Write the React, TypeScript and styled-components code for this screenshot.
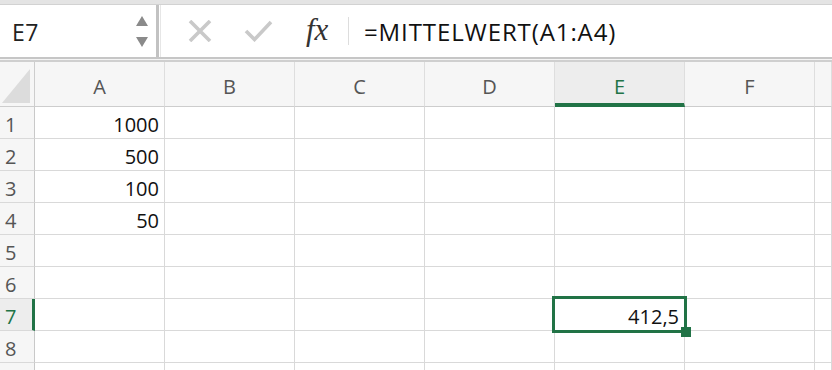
import React from "react";
import styled, { createGlobalStyle } from "styled-components";

const GREEN = "#217346";
const GRID = "#d9d9d9";
const UI_FONT = `"Open Sans", "Liberation Sans", sans-serif`;

const Global = createGlobalStyle`
  html, body { margin: 0; padding: 0; background: #ffffff; }
  body { width: 832px; height: 370px; overflow: hidden; font-family: ${UI_FONT}; }
  * { box-sizing: border-box; }
`;

const Page = styled.div`
  width: 832px;
  height: 370px;
  overflow: hidden;
  display: flex;
  flex-direction: column;
`;

const TopStrip = styled.div`
  height: 5px;
  flex: none;
  background: #e4e4e4;
  border-bottom: 1px solid #d2d2d2;
`;

const FormulaBar = styled.div`
  height: 52px;
  flex: none;
  display: flex;
  align-items: stretch;
  background: #ffffff;
`;

const NameBox = styled.div`
  width: 156px;
  display: flex;
  align-items: center;
  justify-content: space-between;
  padding: 2px 6px 0 12px;
`;

const NameText = styled.span`
  font-size: 23px;
  color: #222;
  letter-spacing: 0.5px;
`;

const NameDivider = styled.div`
  width: 5px;
  flex: none;
  border-left: 3px solid #c2c2c2;
  border-right: 1px solid #e6e6e6;
`;

const Actions = styled.div`
  display: flex;
  align-items: center;
  padding-left: 27px;
`;

const IconSlot = styled.div<{ $w: number }>`
  width: ${(p) => p.$w}px;
  display: flex;
  align-items: center;
`;

const Fx = styled.span`
  font-family: "Liberation Serif", "DejaVu Serif", serif;
  font-style: italic;
  font-size: 31px;
  color: #333;
  line-height: 1;
  margin-top: -3px;
  margin-left: 3px;
`;

const FxSep = styled.div`
  width: 1px;
  height: 28px;
  background: #dddddd;
  margin: 0 15px 0 0;
`;

const FormulaText = styled.div`
  display: flex;
  align-items: center;
  font-size: 24px;
  color: #111;
  padding-top: 1px;
  letter-spacing: 0.9px;
`;

const BarDivider = styled.div`
  height: 5px;
  flex: none;
  border-top: 2px solid #c6c6c6;
  border-bottom: 2px solid #cfcfcf;
  background: #f4f4f4;
`;

const Sheet = styled.div`
  flex: 1;
  display: grid;
  grid-template-columns: 35px repeat(6, 130px) 1fr;
  grid-template-rows: 45px repeat(9, 32px);
  background: #ffffff;
`;

const Corner = styled.div`
  background: #f6f6f6;
  border-right: 1px solid #cdcdcd;
  border-bottom: 1px solid #cdcdcd;
  display: flex;
  align-items: flex-end;
  padding: 0 3px 3px 2px;
`;

const ColHead = styled.div<{ $sel?: boolean }>`
  background: ${(p) => (p.$sel ? "#ededed" : "#f6f6f6")};
  border-right: 1px solid #dedede;
  border-bottom: ${(p) => (p.$sel ? `4px solid ${GREEN}` : "1px solid #cdcdcd")};
  display: flex;
  align-items: center;
  justify-content: center;
  padding-top: ${(p) => (p.$sel ? "7px" : "4px")};
  font-size: 20px;
  color: ${(p) => (p.$sel ? GREEN : "#555")};
`;

const RowHead = styled.div<{ $sel?: boolean }>`
  background: ${(p) => (p.$sel ? "#ededed" : "#f6f6f6")};
  border-right: ${(p) => (p.$sel ? `3px solid ${GREEN}` : "1px solid #c9c9c9")};
  border-bottom: 1px solid ${GRID};
  display: flex;
  align-items: center;
  padding: 3px 0 0 5px;
  font-size: 20px;
  color: ${(p) => (p.$sel ? GREEN : "#555")};
`;

const Cell = styled.div`
  position: relative;
  border-right: 1px solid ${GRID};
  border-bottom: 1px solid ${GRID};
  display: flex;
  align-items: center;
  justify-content: flex-end;
  padding: 3px 5px 0 0;
  font-size: 20px;
  color: #111;
`;

const Selection = styled.div`
  position: absolute;
  left: -3px;
  top: -3px;
  width: 135px;
  height: 37px;
  border: 3px solid ${GREEN};
  pointer-events: none;
  z-index: 2;
`;

const FillHandle = styled.div`
  position: absolute;
  right: -7px;
  bottom: -7px;
  width: 10px;
  height: 10px;
  background: ${GREEN};
`;

const SelValue = styled.span`
  position: relative;
  z-index: 1;
`;

const cols = ["A", "B", "C", "D", "E", "F", ""];
const data: Record<string, string> = {
  A1: "1000",
  A2: "500",
  A3: "100",
  A4: "50",
  E7: "412,5",
};

export default function App() {
  const rows = [1, 2, 3, 4, 5, 6, 7, 8, 9];
  return (
    <>
      <Global />
      <Page>
        <TopStrip />
        <FormulaBar>
          <NameBox>
            <NameText>E7</NameText>
            <svg width="16" height="34" viewBox="0 0 16 34">
              <polygon points="8,1 14,11 2,11" fill="#8a8a8a" />
              <polygon points="2,22 14,22 8,32" fill="#8a8a8a" />
            </svg>
          </NameBox>
          <NameDivider />
          <Actions>
            <IconSlot $w={56}>
              <svg width="24" height="22" viewBox="0 0 24 22">
                <path d="M2 1 L22 21 M22 1 L2 21" stroke="#c9c9c9" strokeWidth="3.6" />
              </svg>
            </IconSlot>
            <IconSlot $w={59}>
              <svg width="29" height="22" viewBox="0 0 29 22">
                <path d="M2 11 L10.5 19.5 L27 2" stroke="#c9c9c9" strokeWidth="3.6" fill="none" />
              </svg>
            </IconSlot>
            <IconSlot $w={45}>
              <Fx>fx</Fx>
            </IconSlot>
            <FxSep />
          </Actions>
          <FormulaText>=MITTELWERT(A1:A4)</FormulaText>
        </FormulaBar>
        <BarDivider />
        <Sheet>
          <Corner>
            <svg width="28" height="34" viewBox="0 0 28 34">
              <polygon points="28,0 28,34 0,34" fill="#dcdcdc" />
            </svg>
          </Corner>
          {cols.map((c, i) => (
            <ColHead key={"h" + i} $sel={c === "E"}>
              {c}
            </ColHead>
          ))}
          {rows.map((r) => (
            <React.Fragment key={r}>
              <RowHead $sel={r === 7}>{r < 9 ? r : ""}</RowHead>
              {cols.map((c, i) => {
                const id = c + r;
                const v = c ? data[id] : undefined;
                if (id === "E7") {
                  return (
                    <Cell key={i}>
                      <Selection>
                        <FillHandle />
                      </Selection>
                      <SelValue>{v}</SelValue>
                    </Cell>
                  );
                }
                return <Cell key={i}>{v}</Cell>;
              })}
            </React.Fragment>
          ))}
        </Sheet>
      </Page>
    </>
  );
}
